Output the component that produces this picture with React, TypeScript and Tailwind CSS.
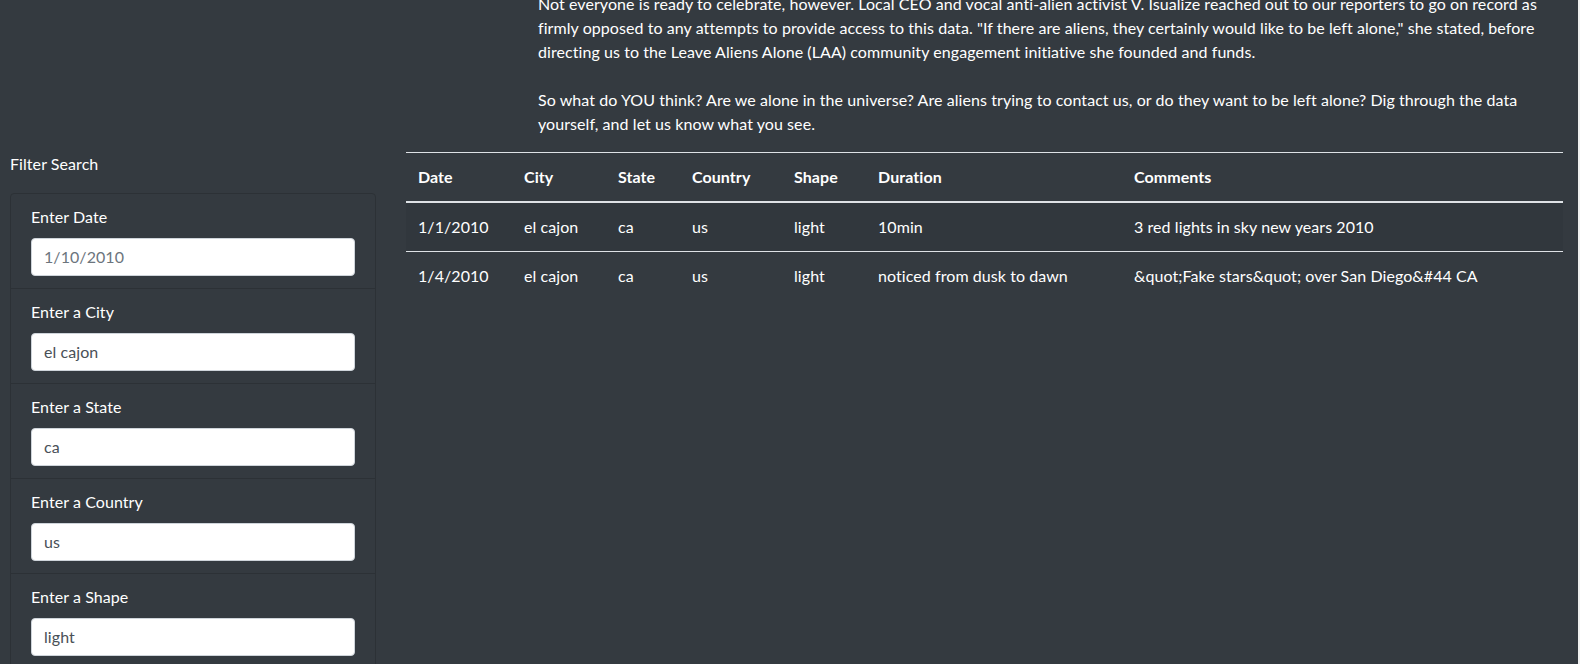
import React from "react";

const rows = [
  { date: "1/1/2010", city: "el cajon", state: "ca", country: "us", shape: "light", duration: "10min", comments: "3 red lights in sky new years 2010" },
  { date: "1/4/2010", city: "el cajon", state: "ca", country: "us", shape: "light", duration: "noticed from dusk to dawn", comments: "&quot;Fake stars&quot; over San Diego&#44 CA" },
];

const filters = [
  { label: "Enter Date", value: "", placeholder: "1/10/2010" },
  { label: "Enter a City", value: "el cajon", placeholder: "" },
  { label: "Enter a State", value: "ca", placeholder: "" },
  { label: "Enter a Country", value: "us", placeholder: "" },
  { label: "Enter a Shape", value: "light", placeholder: "" },
];

export default function App() {
  return (
    <div className="flex h-[664px] w-full overflow-hidden bg-[#343a40] text-white text-base leading-6 tracking-[0.07px] font-['Lato','Liberation_Sans',sans-serif]">
      <div className="flex min-w-0 flex-1 flex-col">
        <div className="-mt-2 pl-[538px] pr-[30px]">
          <p className="mb-6 whitespace-nowrap">
            Not everyone is ready to celebrate, however. Local CEO and vocal anti-alien activist V. Isualize reached out to our reporters to go on record as
            <br />
            firmly opposed to any attempts to provide access to this data. "If there are aliens, they certainly would like to be left alone," she stated, before
            <br />
            directing us to the Leave Aliens Alone (LAA) community engagement initiative she founded and funds.
          </p>
          <p className="mb-4 whitespace-nowrap">
            So what do YOU think? Are we alone in the universe? Are aliens trying to contact us, or do they want to be left alone? Dig through the data
            <br />
            yourself, and let us know what you see.
          </p>
        </div>
        <div className="flex">
          <aside className="w-[406px] shrink-0 pl-[10px]">
            <div className="h-6">Filter Search</div>
            <ul className="mt-[17px] w-[366px] rounded border border-[#2c3136]">
              {filters.map((f, i) => (
                <li key={f.label} className={`px-5 pt-3 pb-3 ${i < filters.length - 1 ? "border-b border-[#2c3136]" : ""}`}>
                  <label className="mb-2 block h-6 leading-[22px]">{f.label}</label>
                  <input
                    className="block h-[38px] w-full rounded border border-[#ced4da] bg-white px-3 pb-[2px] text-base tracking-[0.07px] text-[#495057] placeholder:text-[#6c757d] outline-none"
                    defaultValue={f.value}
                    placeholder={f.placeholder}
                    readOnly
                  />
                </li>
              ))}
            </ul>
          </aside>
          <section className="min-w-0 flex-1 pr-[15px]">
            <table className="w-full table-fixed border-collapse text-left">
              <colgroup>
                <col className="w-[106px]" />
                <col className="w-[94px]" />
                <col className="w-[74px]" />
                <col className="w-[102px]" />
                <col className="w-[84px]" />
                <col className="w-[256px]" />
                <col />
              </colgroup>
              <thead>
                <tr className="border-t border-b-2 border-[#dee2e6]">
                  {["Date", "City", "State", "Country", "Shape", "Duration", "Comments"].map((h) => (
                    <th key={h} className="px-3 py-3 font-bold">{h}</th>
                  ))}
                </tr>
              </thead>
              <tbody>
                {rows.map((r, i) => (
                  <tr key={i} className={`${i > 0 ? "border-t border-[#dee2e6]" : ""} ${i % 2 === 0 ? "bg-[#31373d]" : ""}`}>
                    <td className="px-3 py-3">{r.date}</td>
                    <td className="px-3 py-3">{r.city}</td>
                    <td className="px-3 py-3">{r.state}</td>
                    <td className="px-3 py-3">{r.country}</td>
                    <td className="px-3 py-3">{r.shape}</td>
                    <td className="px-3 py-3">{r.duration}</td>
                    <td className="px-3 py-3">{r.comments}</td>
                  </tr>
                ))}
              </tbody>
            </table>
          </section>
        </div>
      </div>
      <div className="w-[2px] shrink-0 bg-[#f0f0f0]" />
    </div>
  );
}
